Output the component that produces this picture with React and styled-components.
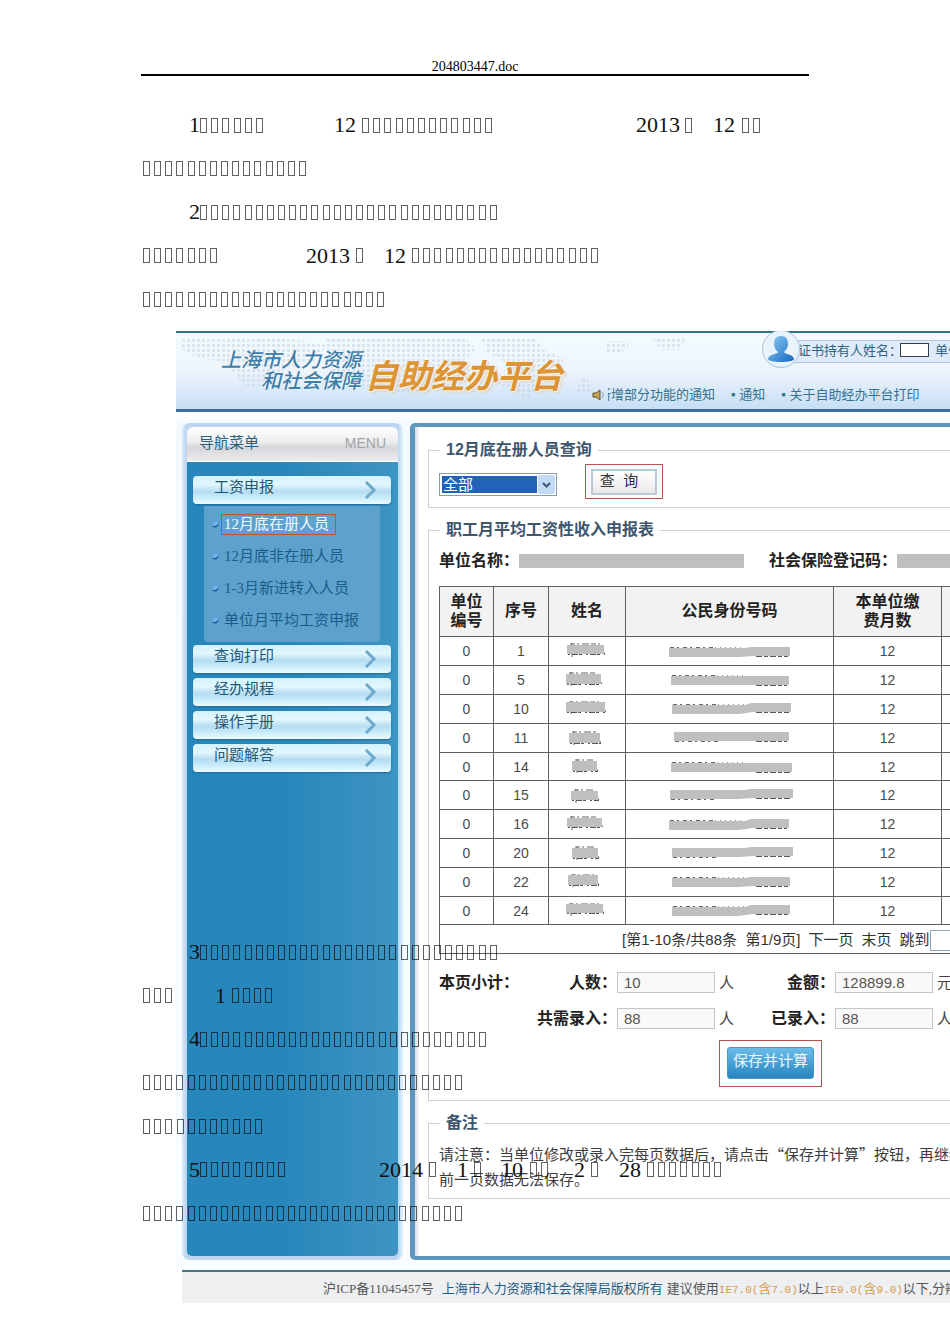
import React from "react";
import styled, { createGlobalStyle } from "styled-components";

const PITCH = 11.16;

// a number is a run of that many empty glyph boxes, a string is printed as is
const introLines = [
  [
    [46, "1"],
    [0, 6],
    [71, "12"],
    [6, 12],
    [144, "2013"],
    [5, 1],
    [21, "12"],
    [7, 2],
  ],
  [[0, 15]],
  [
    [46, "2"],
    [0, 27],
  ],
  [
    [0, 7],
    [89, "2013"],
    [6, 1],
    [21, "12"],
    [6, 17],
  ],
  [[0, 22]],
];

const closingLines = [
  [
    [46, "3"],
    [0, 27],
  ],
  [
    [0, 3],
    [43, "1"],
    [6, 4],
  ],
  [
    [46, "4"],
    [0, 26],
  ],
  [[0, 29]],
  [[0, 11]],
  [
    [46, "5"],
    [0, 8],
    [94, "2014"],
    [6, 1],
    [21, "1"],
    [6, 1],
    [20, "10"],
    [7, 2],
    [26, "2"],
    [6, 1],
    [21, "28"],
    [6, 7],
  ],
  [[0, 29]],
];

const subItems = [
  "12月底在册人员",
  "12月底非在册人员",
  "1-3月新进转入人员",
  "单位月平均工资申报",
];
const navItems = ["查询打印", "经办规程", "操作手册", "问题解答"];

// name: x, y, width, height    id: left, right, left y, right y
const rows = [
  { no: 1, name: [2, 2, 37, 9], id: [4, 125, 5, 4] },
  { no: 5, name: [1, 2, 35, 10], id: [6, 124, 4, 4] },
  { no: 10, name: [1, 1, 39, 10], id: [7, 126, 4, 2] },
  { no: 11, name: [4, 3, 31, 10], id: [9, 124, 2, 2] },
  { no: 14, name: [7, 2, 25, 10], id: [6, 127, 4, 4] },
  { no: 15, name: [6, 4, 27, 9], id: [5, 128, 3, 2] },
  { no: 16, name: [2, 2, 35, 9], id: [4, 124, 5, 3] },
  { no: 20, name: [7, 3, 26, 10], id: [7, 128, 3, 2] },
  { no: 22, name: [3, 1, 30, 10], id: [7, 125, 4, 3] },
  { no: 24, name: [1, 1, 37, 9], id: [7, 125, 4, 2] },
];

function DocLine({ parts }) {
  return (
    <Line>
      {parts.map(([gap, part], i) =>
        typeof part === "string" ? (
          <Digits key={i} $gap={gap}>
            {part}
          </Digits>
        ) : (
          <Boxes
            key={i}
            $gap={gap}
            style={{ width: Math.round((part - 1) * PITCH) + 7 }}
          >
            {Array.from({ length: part }, (_, n) => (
              <i key={n} />
            ))}
          </Boxes>
        )
      )}
    </Line>
  );
}

function NameMask({ box }) {
  const [x, y, w, h] = box;
  return (
    <svg width="44" height="16" viewBox="0 0 44 16" aria-hidden="true">
      <path
        d={`M${x + 3} ${y - 1}H${x + w - 4}`}
        stroke="#666"
        strokeDasharray="5 2 2 3 7 2"
      />
      <path
        d={`M${x + 1} ${y + h + 0.5}H${x + w + 1}`}
        stroke="#555"
        strokeDasharray="2 2 6 1 3 4"
      />
      <path
        d={`M${x + w - 4} ${y + 2}l5 ${h - 2}M${x + 5} ${y - 2}v14`}
        stroke="#666"
      />
      <rect x={x} y={y} width={w} height={h} fill="#bfbfbf" />
    </svg>
  );
}

function IdMask({ box }) {
  const [x0, x1, yl, yr] = box;
  const tick = yl > 3 ? yl - 0.5 : yl + 9.5;
  return (
    <svg width="130" height="16" viewBox="0 0 130 16" aria-hidden="true">
      <path
        d={`M${x0 + 1} ${tick}H${x0 + 46}`}
        stroke="#666"
        strokeDasharray="4 3 2 4"
      />
      {yl > 3 && (
        <path
          d={`M${x0 + 46} ${tick}H${x0 + 74}`}
          stroke="#999"
          strokeDasharray="1 4"
        />
      )}
      <path
        d={`M91 ${yr + 9.5}H${x1 - 2}`}
        stroke="#555"
        strokeDasharray="6 2 4 2"
      />
      <path
        d={`M${x0} ${yl}H80L86 ${yr}H${x1}V${yr + 9}H88L74 ${yl + 9}H${x0}z`}
        fill="#bfbfbf"
      />
    </svg>
  );
}

function Chevron() {
  return (
    <svg width="14" height="20" viewBox="0 0 14 20" aria-hidden="true">
      <path
        d="M2 2l8 8-8 8"
        fill="none"
        stroke="#6fa9cc"
        strokeWidth="3"
      />
    </svg>
  );
}

function WorldDots() {
  return (
    <MapArt width="560" height="76" viewBox="0 0 560 76" aria-hidden="true">
      <defs>
        <pattern id="dots" width="5" height="5" patternUnits="userSpaceOnUse">
          <rect x="1" y="1" width="3" height="3" fill="#c3d3df" />
        </pattern>
      </defs>
      <g fill="url(#dots)" opacity="0.5">
        <path d="M5 5H110L150 12 140 28 110 34 95 50 70 56 50 30 20 24 5 16z" />
        <path d="M150 5H290L300 16 285 30 300 40 280 50 240 62 200 60 170 50 150 34z" />
        <path d="M305 5H360L366 16 388 26 384 40 368 50 350 66 326 54 330 30 312 20z" />
        <path d="M430 8h22v6l-8 6h-14zM476 5h34l-6 12h-20z" />
        <path d="M404 46h8l6 14h-18z" />
      </g>
    </MapArt>
  );
}

function Sidebar() {
  return (
    <SideFrame>
      <SideHead>
        <h2>导航菜单</h2>
        <span>MENU</span>
      </SideHead>
      <Nav>
        <NavButton type="button">
          <span>工资申报</span>
          <Chevron />
        </NavButton>
        <SubMenu>
          {subItems.map((item, i) => (
            <li key={item}>
              <svg width="7" height="7" viewBox="0 0 7 7" aria-hidden="true">
                <circle cx="3.5" cy="3.5" r="3" fill="#6db4ea" />
                <path d="M1 5a3 3 0 0 0 5-2" fill="none" stroke="#1d5f9c" strokeWidth="1.5" />
              </svg>
              <SubLink href="#" $active={i === 0}>
                {item}
              </SubLink>
            </li>
          ))}
        </SubMenu>
        {navItems.map((item) => (
          <NavButton type="button" key={item}>
            <span>{item}</span>
            <Chevron />
          </NavButton>
        ))}
      </Nav>
    </SideFrame>
  );
}

function SalaryTable() {
  return (
    <Table>
      <colgroup>
        <col width="54" />
        <col width="55" />
        <col width="77" />
        <col width="208" />
        <col width="108" />
        <col />
      </colgroup>
      <thead>
        <tr>
          <th>
            单位
            <br />
            编号
          </th>
          <th>序号</th>
          <th>姓名</th>
          <th>公民身份号码</th>
          <th>
            本单位缴
            <br />
            费月数
          </th>
          <th />
        </tr>
      </thead>
      <tbody>
        {rows.map((row) => (
          <tr key={row.no}>
            <td>0</td>
            <td>{row.no}</td>
            <td>
              <NameMask box={row.name} />
            </td>
            <td>
              <IdMask box={row.id} />
            </td>
            <td>12</td>
            <td />
          </tr>
        ))}
      </tbody>
      <tfoot>
        <tr>
          <td colSpan="6">
            <Pager>
              <span>[第1-10条/共88条&nbsp; 第1/9页]</span>
              <a href="#">下一页</a>
              <a href="#">末页</a>
              <label htmlFor="jump">跳到</label>
              <input id="jump" type="text" />
            </Pager>
          </td>
        </tr>
      </tfoot>
    </Table>
  );
}

export default function App() {
  return (
    <Page>
      <GlobalStyle />
      <DocHeader>204803447.doc</DocHeader>
      <DocText>
        {introLines.map((parts, i) => (
          <DocLine key={i} parts={parts} />
        ))}
      </DocText>
      <Stage>
        <Portal>
          <PortalBody>
            <Banner>
              <WorldDots />
              <Logo>
                <LogoSmall>
                  <span>上海市人力资源</span>
                  <span>和社会保障</span>
                </LogoSmall>
                <LogoBig>自助经办平台</LogoBig>
              </Logo>
              <BannerSide>
                <UserBar>
                  <Avatar>
                    <svg width="28" height="28" viewBox="0 0 28 28" aria-hidden="true">
                      <defs>
                        <linearGradient id="man" x1="0" y1="0" x2="1" y2="1">
                          <stop offset="0" stopColor="#8fd0fa" />
                          <stop offset="1" stopColor="#1566bd" />
                        </linearGradient>
                      </defs>
                      <path
                        d="M14 1c5 0 7 3 7 8 0 4-2 6-4 8 0 2 9 2 10 7 0 2-6 3-13 3S1 26 1 24c1-5 10-5 10-7-2-2-4-4-4-8 0-5 2-8 7-8z"
                        fill="url(#man)"
                      />
                    </svg>
                  </Avatar>
                  <UserInfo>
                    <span>证书持有人姓名：</span>
                    <NameBox />
                    <span>单位名称</span>
                  </UserInfo>
                </UserBar>
                <Notices>
                  <svg width="13" height="12" viewBox="0 0 13 12" aria-hidden="true">
                    <path d="M1 4h3l4-3v10L4 8H1z" fill="#c9a552" stroke="#5d5330" />
                    <path d="M10 3q3 3 0 6" fill="none" stroke="#8aa0ae" />
                  </svg>
                  <NoticeWindow>
                    <a href="#">新增部分功能的通知</a>
                    <a href="#">▪ 通知</a>
                    <a href="#">▪ 关于自助经办平台打印</a>
                  </NoticeWindow>
                </Notices>
              </BannerSide>
            </Banner>
            <Columns>
              <Sidebar />
              <Main>
                <Group>
                  <legend>12月底在册人员查询</legend>
                  <QueryRow>
                    <SelectBox>
                      <select aria-label="人员范围" defaultValue="全部">
                        <option>全部</option>
                      </select>
                      <Arrow>
                        <svg width="9" height="6" viewBox="0 0 9 6" aria-hidden="true">
                          <path d="M1 1l3.5 3.5L8 1" fill="none" stroke="#3f5578" strokeWidth="2" />
                        </svg>
                      </Arrow>
                    </SelectBox>
                    <QueryMark>
                      <QueryButton type="button">查&nbsp; 询</QueryButton>
                    </QueryMark>
                  </QueryRow>
                </Group>
                <Group>
                  <legend>职工月平均工资性收入申报表</legend>
                  <UnitRow>
                    <b>单位名称：</b>
                    <Blank />
                    <b>社会保险登记码：</b>
                    <Blank />
                  </UnitRow>
                  <SalaryTable />
                  <Summary>
                    <b>本页小计：</b>
                    <label htmlFor="people">人数：</label>
                    <input id="people" type="text" readOnly value="10" />
                    <span>人</span>
                    <label htmlFor="amount">金额：</label>
                    <input id="amount" type="text" readOnly value="128899.8" />
                    <span>元</span>
                    <b />
                    <label htmlFor="needed">共需录入：</label>
                    <input id="needed" type="text" readOnly value="88" />
                    <span>人</span>
                    <label htmlFor="entered">已录入：</label>
                    <input id="entered" type="text" readOnly value="88" />
                    <span>人</span>
                  </Summary>
                  <SaveMark>
                    <SaveButton type="button">保存并计算</SaveButton>
                  </SaveMark>
                </Group>
                <Group>
                  <legend>备注</legend>
                  <Note>
                    请注意：当单位修改或录入完每页数据后，请点击“保存并计算”按钮，再继续
                    <br />
                    前一页数据无法保存。
                  </Note>
                </Group>
              </Main>
            </Columns>
            <Footer>
              <span>沪ICP备11045457号</span>
              <a href="#">上海市人力资源和社会保障局版权所有</a>
              <span>
                建议使用
                <Ie>
                  IE7.0(<b>含</b>7.0)
                </Ie>
                以上
                <Ie>
                  IE9.0(<b>含</b>9.0)
                </Ie>
                以下,分辨率
              </span>
            </Footer>
          </PortalBody>
        </Portal>
        <Overlay>
          {closingLines.map((parts, i) => (
            <DocLine key={i} parts={parts} />
          ))}
        </Overlay>
      </Stage>
    </Page>
  );
}

const GlobalStyle = createGlobalStyle`
  * {
    box-sizing: border-box;
  }
  body {
    margin: 0;
    background-color: white;
    font-family: "Liberation Sans", "Noto Sans CJK SC", sans-serif;
  }
  a {
    color: inherit;
    text-decoration: none;
  }
  svg {
    display: block;
    flex-shrink: 0;
  }
  input, select, button {
    font-family: inherit;
  }
`;
const Page = styled.div`
  min-height: 100vh;
  padding-top: 60px;
  overflow: hidden;
`;
const DocHeader = styled.header`
  margin: 0 141px;
  border-bottom: 2px solid black;
  font-family: "Liberation Serif", serif;
  font-size: 14px;
  line-height: 14px;
  text-align: center;
`;
const DocText = styled.div`
  padding: 27px 0 10px 143px;
`;
const Line = styled.div`
  display: flex;
  align-items: center;
  height: 44px;
  &:nth-child(even) {
    height: 43px;
  }
`;
const Digits = styled.span`
  margin-left: ${(p) => p.$gap}px;
  color: #111;
  font-family: "Liberation Serif", serif;
  font-size: 22px;
  line-height: 22px;
`;
const Boxes = styled.span`
  display: flex;
  justify-content: space-between;
  margin-left: ${(p) => p.$gap}px;
  i {
    width: 7px;
    height: 15px;
    border: 1px solid rgba(0, 0, 0, 0.62);
  }
`;
const Stage = styled.div`
  display: grid;
  grid-template-columns: minmax(0, 1fr);
  > * {
    grid-area: 1 / 1;
  }
`;
const Overlay = styled.div`
  padding: 599px 0 0 143px;
  pointer-events: none;
  z-index: 1;
`;
const Portal = styled.div`
  padding-left: 176px;
  overflow: hidden;
`;
const PortalBody = styled.div`
  min-width: 1000px;
`;
const Banner = styled.div`
  position: relative;
  display: flex;
  height: 81px;
  padding-left: 45px;
  border-top: 2px solid #2f7286;
  border-bottom: 3px solid #3d6e9e;
  background: linear-gradient(#f3fbfe, #eef4fc 50%, #c6dff4);
`;
const MapArt = styled.svg`
  position: absolute;
  top: 0;
  left: 0;
`;
const Logo = styled.div`
  position: relative;
  display: flex;
  gap: 4px;
  width: 371px;
  padding-top: 17px;
  font-style: italic;
  white-space: nowrap;
`;
const LogoSmall = styled.div`
  display: flex;
  flex-direction: column;
  align-items: flex-end;
  color: #3d7ea8;
  font-size: 20px;
  font-weight: 500;
  line-height: 21px;
  text-shadow: 0 0 2px white;
`;
const LogoBig = styled.div`
  padding-top: 8px;
  color: #dc9434;
  font-size: 33px;
  font-weight: bold;
  line-height: 38px;
  text-shadow: 0 0 2px white, 1px 1px 2px white, 2px 2px 2px #d9c7a8;
`;
const BannerSide = styled.div`
  position: relative;
  flex: 1;
`;
const UserBar = styled.div`
  display: flex;
  align-items: center;
  height: 36px;
  margin-left: 170px;
`;
const Avatar = styled.div`
  display: flex;
  align-items: center;
  justify-content: center;
  width: 38px;
  height: 38px;
  margin-top: -5px;
  border: 1px solid #a9c3dc;
  border-radius: 50%;
  background-color: #e8f3fc;
  z-index: 1;
`;
const UserInfo = styled.div`
  display: flex;
  flex: 1;
  align-items: center;
  height: 23px;
  margin-left: -10px;
  padding-left: 7px;
  border: 1px solid #b4c8dc;
  background-color: #dfeafa;
  color: #2f6580;
  font-size: 13px;
  line-height: 20px;
  white-space: nowrap;
`;
const NameBox = styled.span`
  width: 29px;
  height: 14px;
  margin: 0 6px 2px -2px;
  border: 1px solid #33404a;
  background-color: white;
`;
const Notices = styled.div`
  display: flex;
  align-items: center;
  gap: 3px;
  height: 20px;
  margin-top: 16px;
`;
const NoticeWindow = styled.div`
  display: flex;
  gap: 16px;
  overflow: hidden;
  color: #33728f;
  font-size: 13px;
  line-height: 20px;
  white-space: nowrap;
  a:first-child {
    margin-left: -10px;
  }
`;
const Columns = styled.div`
  display: flex;
  gap: 7px;
  padding: 11px 0 10px 6px;
  background: linear-gradient(#ffffff, #f3fafe 12px, #f9fdff);
`;
const SideFrame = styled.aside`
  display: flex;
  flex-direction: column;
  width: 221px;
  padding: 4px 5px;
  border-radius: 8px;
  background: linear-gradient(90deg, #d9eefa, #bcd5f1 4px, #bcd5f1 216px, #dff3fd);
`;
const SideHead = styled.div`
  display: flex;
  justify-content: space-between;
  height: 35px;
  padding: 0 12px;
  border-bottom: 1px solid white;
  border-radius: 6px 6px 0 0;
  background: linear-gradient(#ffffff, #ececee 45%, #d6d7da 60%, #ececee);
  h2 {
    margin: 0;
    color: #2d627c;
    font-size: 15px;
    font-weight: normal;
    line-height: 32px;
  }
  span {
    color: #a2a4a8;
    font-size: 14px;
    line-height: 33px;
  }
`;
const Nav = styled.nav`
  flex: 1;
  padding: 14px 7px 0 6px;
  border-radius: 0 0 5px 5px;
  background: linear-gradient(90deg, #2787bb 45%, #3e94c2);
`;
const NavButton = styled.button`
  display: flex;
  align-items: flex-start;
  justify-content: space-between;
  width: 100%;
  height: 28px;
  margin-bottom: 5px;
  padding: 0 13px 0 21px;
  border: none;
  border-radius: 4px;
  background: linear-gradient(#d3f2fd, #e2f7fe 30%, #b6dcf2 55%, #c5eafa 75%, #effcff);
  box-shadow: 0 1px 2px #1e6c9a;
  color: #1f5876;
  font-size: 15px;
  line-height: 21px;
  svg {
    margin-top: 4px;
  }
`;
const SubMenu = styled.ul`
  margin: -3px 11px 3px;
  padding: 2px 0 6px 8px;
  border-radius: 0 0 4px 4px;
  background-color: #5ca2cd;
  list-style: none;
  li {
    display: flex;
    align-items: center;
    gap: 2px;
    height: 32px;
  }
`;
const SubLink = styled.a`
  padding: 0 6px 0 2px;
  border: 1px solid ${(p) => (p.$active ? "#b5573f" : "transparent")};
  color: ${(p) => (p.$active ? "#f2fbff" : "#1c5c8a")};
  font-family: "Liberation Serif", "Noto Sans CJK SC", serif;
  font-size: 15px;
  line-height: 19px;
  white-space: nowrap;
`;
const Main = styled.main`
  flex: 1;
  min-width: 0;
  padding: 13px 13px 45px;
  border: solid #5d97bd;
  border-width: 4px 4px 4px 5px;
  border-radius: 5px;
  background: linear-gradient(90deg, #d5dde6, #ffffff 5px);
`;
const Group = styled.fieldset`
  min-width: 0;
  margin: 0 0 12px;
  padding: 0 10px;
  border: 1px solid #ccd1d5;
  legend {
    margin-left: 1px;
    padding: 0 6px;
    color: #3e566e;
    font-size: 16px;
    font-weight: bold;
    line-height: 20px;
  }
`;
const QueryRow = styled.div`
  display: flex;
  align-items: flex-end;
  gap: 28px;
  padding: 4px 0 8px;
`;
const SelectBox = styled.div`
  display: flex;
  width: 118px;
  height: 23px;
  margin-bottom: 3px;
  padding: 1px;
  border: 1px solid #8b9cab;
  background-color: white;
  select {
    flex: 1;
    padding: 0 1px;
    border: 1px solid white;
    appearance: none;
    background-color: #2263b8;
    color: white;
    font-size: 15px;
    line-height: 17px;
  }
`;
const Arrow = styled.span`
  display: flex;
  align-items: center;
  justify-content: center;
  width: 17px;
  border-radius: 2px;
  background-color: #c3daf5;
  pointer-events: none;
`;
const QueryMark = styled.div`
  padding: 4px 5px 3px;
  border: 1px solid #b0564f;
`;
const QueryButton = styled.button`
  display: block;
  width: 66px;
  height: 26px;
  padding: 0 10px 2px 0;
  border: 2px solid #b9c9d5;
  background: linear-gradient(#ffffff, #e9e9eb);
  color: #333;
  font-size: 15px;
  line-height: 20px;
  white-space: nowrap;
`;
const UnitRow = styled.div`
  display: flex;
  align-items: center;
  padding: 11px 0 15px;
  color: #222;
  font-size: 16px;
  line-height: 20px;
  white-space: nowrap;
`;
const Blank = styled.span`
  width: 225px;
  height: 14px;
  margin-right: 25px;
  background-color: #bfbfbf;
`;
const Table = styled.table`
  width: 100%;
  border-collapse: collapse;
  table-layout: fixed;
  th,
  td {
    padding: 0;
    border: 1px solid #5f5f5f;
  }
  th {
    height: 50px;
    padding-bottom: 2px;
    background-color: #f2f2f2;
    color: #222;
    font-size: 16px;
    line-height: 19px;
  }
  td {
    height: 29px;
    color: #4a4a4a;
    font-size: 14px;
    line-height: 20px;
    text-align: center;
  }
  tbody tr:nth-child(5n) td {
    height: 28px;
  }
  td svg {
    margin: 0 auto;
  }
`;
const Pager = styled.div`
  display: flex;
  align-items: center;
  gap: 8px;
  padding: 2px 0 0 182px;
  color: #333;
  font-size: 15px;
  white-space: nowrap;
  input {
    width: 44px;
    height: 21px;
    margin-left: -7px;
    border: 1px solid #8fa3b5;
  }
`;
const Summary = styled.div`
  display: grid;
  grid-template-columns: 98px 80px 98px 20px 100px 98px 20px;
  align-items: center;
  row-gap: 15px;
  padding-top: 18px;
  color: #222;
  font-size: 16px;
  line-height: 21px;
  white-space: nowrap;
  label {
    font-weight: bold;
    text-align: right;
  }
  input {
    width: 98px;
    height: 21px;
    padding: 0 6px;
    border: 1px solid #c4c7ca;
    background-color: #f9f9f9;
    color: #555;
    font-size: 15px;
  }
  span {
    padding-left: 4px;
    font-size: 15px;
    color: #444;
  }
`;
const SaveMark = styled.div`
  width: 103px;
  margin: 11px 0 13px 280px;
  padding: 6px 7px 7px;
  border: 1px solid #b0564f;
`;
const SaveButton = styled.button`
  display: block;
  width: 87px;
  height: 32px;
  padding: 0 0 4px;
  border: 1px solid #4b97c4;
  border-radius: 3px;
  background: linear-gradient(#6cbce6, #4ba5d8 45%, #2a84bf);
  color: #eaf7ff;
  font-size: 15px;
  line-height: 20px;
`;
const Note = styled.p`
  margin: 0;
  padding: 8px 0 7px;
  color: #3d3d3d;
  font-family: "Noto Sans CJK SC", sans-serif;
  font-size: 15px;
  line-height: 25px;
  white-space: nowrap;
`;
const Footer = styled.footer`
  display: flex;
  gap: 4px;
  height: 33px;
  margin-left: 6px;
  padding-left: 141px;
  border-top: 2px solid #4a7580;
  background-color: #eeeff1;
  color: #555;
  font-family: "Liberation Serif", "Noto Sans CJK SC", serif;
  font-size: 13px;
  line-height: 33px;
  white-space: nowrap;
  a {
    margin-left: 4px;
    color: #1f6085;
  }
`;
const Ie = styled.span`
  color: #d99a45;
  font-family: "Liberation Mono", "Noto Sans CJK SC", monospace;
  font-size: 11px;
  b {
    font-size: 13px;
    font-weight: normal;
  }
`;
